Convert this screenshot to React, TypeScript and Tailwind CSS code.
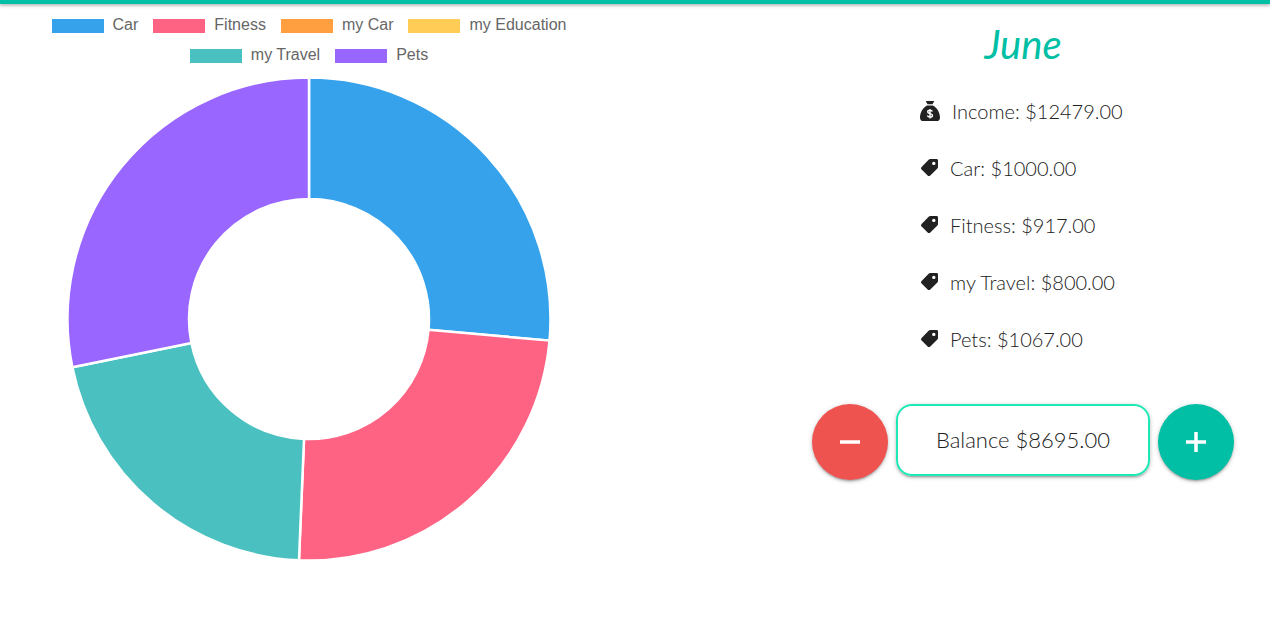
type Category = { name: string; amount: number; fill: string; swatch: string };

const categories: Category[] = [
  { name: 'Car', amount: 1000, fill: 'fill-[#36a2eb]', swatch: 'bg-[#36a2eb]' },
  { name: 'Fitness', amount: 917, fill: 'fill-[#ff6384]', swatch: 'bg-[#ff6384]' },
  { name: 'my Car', amount: 0, fill: 'fill-[#ff9f40]', swatch: 'bg-[#ff9f40]' },
  { name: 'my Education', amount: 0, fill: 'fill-[#ffcd56]', swatch: 'bg-[#ffcd56]' },
  { name: 'my Travel', amount: 800, fill: 'fill-[#4bc0c0]', swatch: 'bg-[#4bc0c0]' },
  { name: 'Pets', amount: 1067, fill: 'fill-[#9966ff]', swatch: 'bg-[#9966ff]' },
];

const spent = categories.filter((c) => c.amount > 0);
const total = spent.reduce((sum, c) => sum + c.amount, 0);

const OUTER = 241.5;
const INNER = 120;

function point(radius: number, share: number) {
  const angle = share * 2 * Math.PI - Math.PI / 2;
  return `${radius * Math.cos(angle)} ${radius * Math.sin(angle)}`;
}

function slicePath(start: number, end: number) {
  const large = end - start > 0.5 ? 1 : 0;
  return [
    `M${point(OUTER, start)}`,
    `A${OUTER} ${OUTER} 0 ${large} 1 ${point(OUTER, end)}`,
    `L${point(INNER, end)}`,
    `A${INNER} ${INNER} 0 ${large} 0 ${point(INNER, start)}`,
    'Z',
  ].join(' ');
}

function Doughnut() {
  let before = 0;
  return (
    <svg viewBox="-242 -242 484 484" className="w-[484px] max-w-full" role="img" aria-label="Expenses by category">
      {spent.map((c) => {
        const start = before / total;
        before += c.amount;
        return (
          <path key={c.name} d={slicePath(start, before / total)} className={`${c.fill} stroke-white stroke-[2.500px]`} />
        );
      })}
    </svg>
  );
}

function Legend() {
  return (
    <ul className="flex max-w-[540px] flex-wrap justify-center gap-x-[15px] font-['Liberation_Sans',Arial,sans-serif] text-base text-[#666666]">
      {categories.map((c) => (
        <li key={c.name} className="flex h-[30px] items-center gap-[9px]">
          <span className={`mt-px h-[14px] w-[52px] ${c.swatch}`} />
          {c.name}
        </li>
      ))}
    </ul>
  );
}

function MoneyBagIcon() {
  return (
    <svg viewBox="0 0 20 20" className="size-5 shrink-0" aria-hidden="true">
      <path
        d="M5.700 0h8.600l-1.800 3.200h-5zM7 4.400h6C17.200 6.600 20 11.600 20 16.400c0 2.400-1.200 3.600-3.400 3.600H3.400C1.200 20 0 18.800 0 16.400 0 11.600 2.800 6.600 7 4.400z"
        className="fill-[#212121]"
      />
      <path
        d="M12.400 10.600c-.4-1-1.300-1.300-2.400-1.300-1.300 0-2.300.6-2.300 1.600 0 2.300 4.800 1.100 4.800 3.500 0 1.100-1.100 1.700-2.500 1.700-1.300 0-2.300-.5-2.600-1.600M10 8v9.600"
        className="fill-none stroke-white stroke-[1.400px]"
      />
    </svg>
  );
}

function TagIcon() {
  return (
    <svg viewBox="0 0 17 17" className="size-[17px] shrink-0" aria-hidden="true">
      <path
        fillRule="evenodd"
        d="M9.300 0H15.500C16.500 0 17 .6 17 1.500V8c0 .6-.2 1-.6 1.400L9.300 16.400c-.8.8-1.900.8-2.700 0L.6 10.500c-.8-.8-.8-1.800 0-2.600L7.900.6C8.300.2 8.700 0 9.300 0zM12.800 2.700a1.700 1.700 0 1 0 0 3.400 1.700 1.700 0 0 0 0-3.400z"
        className="fill-[#212121]"
      />
    </svg>
  );
}

const circleButton =
  'flex size-[76px] shrink-0 items-center justify-center rounded-full shadow-[0_2px_2px_0_rgba(0,0,0,0.14),0_3px_1px_-2px_rgba(0,0,0,0.12),0_1px_5px_0_rgba(0,0,0,0.2)]';

export default function App() {
  return (
    <div className="min-h-screen bg-white font-['Lato',sans-serif] text-xl font-light text-[#212121]">
      <header className="h-1 bg-[#00bfa5] shadow-[0_2px_2px_0_rgba(0,0,0,0.14),0_3px_1px_-2px_rgba(0,0,0,0.12),0_1px_5px_0_rgba(0,0,0,0.2)]" />
      <main className="grid grid-cols-[618fr_494fr] gap-x-[158px]">
        <section className="flex flex-col items-center gap-[7px] pt-[6px]">
          <Legend />
          <Doughnut />
        </section>
        <section className="flex flex-col items-center pt-4">
          <h1 className="text-[40px] font-normal italic leading-[48px] text-[#00bfa5]">June</h1>
          <ul className="mt-[14px] w-[206px] whitespace-nowrap">
            <li className="flex h-[57px] items-center gap-3">
              <MoneyBagIcon />
              Income: $12479.00
            </li>
            {spent.map((c) => (
              <li key={c.name} className="flex h-[57px] items-center gap-3 pl-px">
                <TagIcon />
                {c.name}: ${c.amount.toFixed(2)}
              </li>
            ))}
          </ul>
          <div className="mt-[37px] flex gap-2">
            <button type="button" aria-label="Add expense" className={`${circleButton} bg-[#ef5350]`}>
              <svg viewBox="0 0 20 20" className="size-5" aria-hidden="true">
                <path d="M0 10h20" className="stroke-white stroke-[3.500px]" />
              </svg>
            </button>
            <div className="flex h-[72px] w-[254px] items-center justify-center rounded-2xl border-2 border-[#1de9b6] text-[22px] shadow-[0_2px_2px_0_rgba(0,0,0,0.14),0_3px_1px_-2px_rgba(0,0,0,0.12),0_1px_5px_0_rgba(0,0,0,0.2)]">
              Balance $8695.00
            </div>
            <button type="button" aria-label="Add income" className={`${circleButton} bg-[#00bfa5]`}>
              <svg viewBox="0 0 20 20" className="size-5" aria-hidden="true">
                <path d="M0 10h20M10 0v20" className="stroke-white stroke-[3.500px]" />
              </svg>
            </button>
          </div>
        </section>
      </main>
    </div>
  );
}
